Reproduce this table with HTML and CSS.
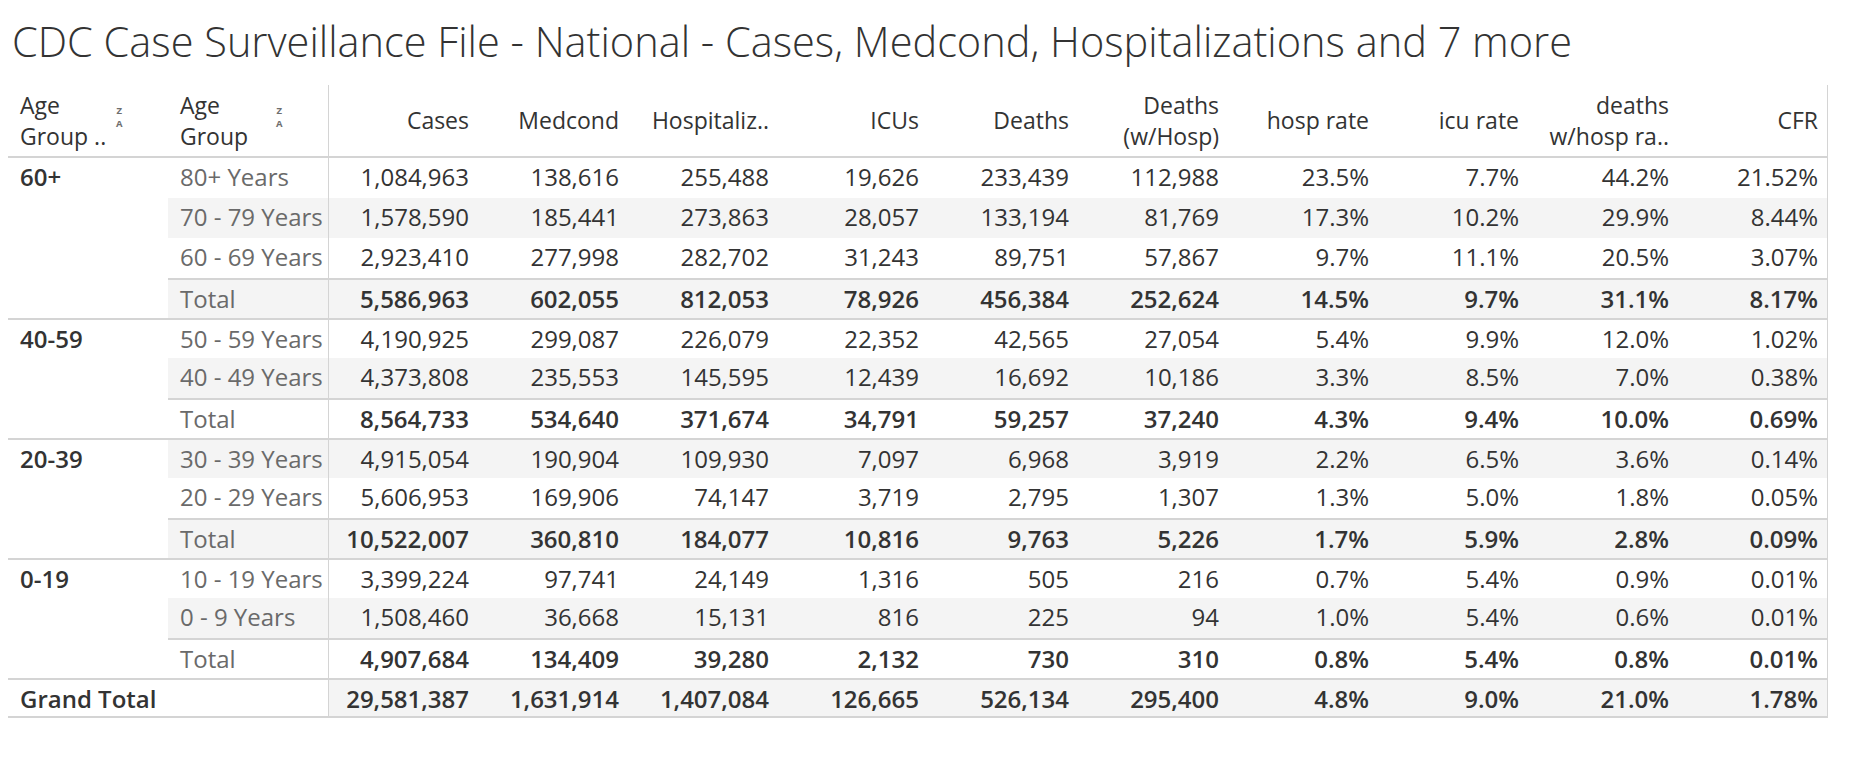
FILE: index.html
```html
<!DOCTYPE html>
<html>
<head>
<meta charset="utf-8">
<link rel="stylesheet" href="styles.css">
</head>
<body>
<div class="page">
  <h1 class="title">CDC Case Surveillance File - National - Cases, Medcond, Hospitalizations and 7 more</h1>
  <div class="grid">
    <div class="hc hl"><span class="lbl">Age<br>Group ..</span><span class="sort">Z<br>A</span></div>
    <div class="hc hl"><span class="lbl">Age<br>Group</span><span class="sort">Z<br>A</span></div>
    <div class="hc hr c1">Cases</div>
    <div class="hc hr">Medcond</div>
    <div class="hc hr">Hospitaliz..</div>
    <div class="hc hr">ICUs</div>
    <div class="hc hr">Deaths</div>
    <div class="hc hr">Deaths<br>(w/Hosp)</div>
    <div class="hc hr">hosp rate</div>
    <div class="hc hr">icu rate</div>
    <div class="hc hr">deaths<br>w/hosp ra..</div>
    <div class="hc hr cl">CFR</div>

    <!-- 60+ -->
    <div class="g span4">60+</div>
    <div class="s">80+ Years</div>
    <div class="n c1">1,084,963</div><div class="n">138,616</div><div class="n">255,488</div><div class="n">19,626</div><div class="n">233,439</div><div class="n">112,988</div><div class="n">23.5%</div><div class="n">7.7%</div><div class="n">44.2%</div><div class="n cl">21.52%</div>
    <div class="s alt">70 - 79 Years</div>
    <div class="n c1 alt">1,578,590</div><div class="n alt">185,441</div><div class="n alt">273,863</div><div class="n alt">28,057</div><div class="n alt">133,194</div><div class="n alt">81,769</div><div class="n alt">17.3%</div><div class="n alt">10.2%</div><div class="n alt">29.9%</div><div class="n cl alt">8.44%</div>
    <div class="s">60 - 69 Years</div>
    <div class="n c1">2,923,410</div><div class="n">277,998</div><div class="n">282,702</div><div class="n">31,243</div><div class="n">89,751</div><div class="n">57,867</div><div class="n">9.7%</div><div class="n">11.1%</div><div class="n">20.5%</div><div class="n cl">3.07%</div>
    <div class="s t alt">Total</div>
    <div class="n t b c1 alt">5,586,963</div><div class="n t b alt">602,055</div><div class="n t b alt">812,053</div><div class="n t b alt">78,926</div><div class="n t b alt">456,384</div><div class="n t b alt">252,624</div><div class="n t b alt">14.5%</div><div class="n t b alt">9.7%</div><div class="n t b alt">31.1%</div><div class="n t b cl alt">8.17%</div>

    <!-- 40-59 -->
    <div class="g span3 sep">40-59</div>
    <div class="s sep">50 - 59 Years</div>
    <div class="n sep c1">4,190,925</div><div class="n sep">299,087</div><div class="n sep">226,079</div><div class="n sep">22,352</div><div class="n sep">42,565</div><div class="n sep">27,054</div><div class="n sep">5.4%</div><div class="n sep">9.9%</div><div class="n sep">12.0%</div><div class="n sep cl">1.02%</div>
    <div class="s alt">40 - 49 Years</div>
    <div class="n c1 alt">4,373,808</div><div class="n alt">235,553</div><div class="n alt">145,595</div><div class="n alt">12,439</div><div class="n alt">16,692</div><div class="n alt">10,186</div><div class="n alt">3.3%</div><div class="n alt">8.5%</div><div class="n alt">7.0%</div><div class="n cl alt">0.38%</div>
    <div class="s t">Total</div>
    <div class="n t b c1">8,564,733</div><div class="n t b">534,640</div><div class="n t b">371,674</div><div class="n t b">34,791</div><div class="n t b">59,257</div><div class="n t b">37,240</div><div class="n t b">4.3%</div><div class="n t b">9.4%</div><div class="n t b">10.0%</div><div class="n t b cl">0.69%</div>

    <!-- 20-39 -->
    <div class="g span3 sep">20-39</div>
    <div class="s sep alt">30 - 39 Years</div>
    <div class="n sep c1 alt">4,915,054</div><div class="n sep alt">190,904</div><div class="n sep alt">109,930</div><div class="n sep alt">7,097</div><div class="n sep alt">6,968</div><div class="n sep alt">3,919</div><div class="n sep alt">2.2%</div><div class="n sep alt">6.5%</div><div class="n sep alt">3.6%</div><div class="n sep cl alt">0.14%</div>
    <div class="s">20 - 29 Years</div>
    <div class="n c1">5,606,953</div><div class="n">169,906</div><div class="n">74,147</div><div class="n">3,719</div><div class="n">2,795</div><div class="n">1,307</div><div class="n">1.3%</div><div class="n">5.0%</div><div class="n">1.8%</div><div class="n cl">0.05%</div>
    <div class="s t alt">Total</div>
    <div class="n t b c1 alt">10,522,007</div><div class="n t b alt">360,810</div><div class="n t b alt">184,077</div><div class="n t b alt">10,816</div><div class="n t b alt">9,763</div><div class="n t b alt">5,226</div><div class="n t b alt">1.7%</div><div class="n t b alt">5.9%</div><div class="n t b alt">2.8%</div><div class="n t b cl alt">0.09%</div>

    <!-- 0-19 -->
    <div class="g span3 sep">0-19</div>
    <div class="s sep">10 - 19 Years</div>
    <div class="n sep c1">3,399,224</div><div class="n sep">97,741</div><div class="n sep">24,149</div><div class="n sep">1,316</div><div class="n sep">505</div><div class="n sep">216</div><div class="n sep">0.7%</div><div class="n sep">5.4%</div><div class="n sep">0.9%</div><div class="n sep cl">0.01%</div>
    <div class="s alt">0 - 9 Years</div>
    <div class="n c1 alt">1,508,460</div><div class="n alt">36,668</div><div class="n alt">15,131</div><div class="n alt">816</div><div class="n alt">225</div><div class="n alt">94</div><div class="n alt">1.0%</div><div class="n alt">5.4%</div><div class="n alt">0.6%</div><div class="n cl alt">0.01%</div>
    <div class="s t">Total</div>
    <div class="n t b c1">4,907,684</div><div class="n t b">134,409</div><div class="n t b">39,280</div><div class="n t b">2,132</div><div class="n t b">730</div><div class="n t b">310</div><div class="n t b">0.8%</div><div class="n t b">5.4%</div><div class="n t b">0.8%</div><div class="n t b cl">0.01%</div>

    <!-- Grand total -->
    <div class="gt sep">Grand Total</div>
    <div class="n sep gtr b c1 alt">29,581,387</div><div class="n sep gtr b alt">1,631,914</div><div class="n sep gtr b alt">1,407,084</div><div class="n sep gtr b alt">126,665</div><div class="n sep gtr b alt">526,134</div><div class="n sep gtr b alt">295,400</div><div class="n sep gtr b alt">4.8%</div><div class="n sep gtr b alt">9.0%</div><div class="n sep gtr b alt">21.0%</div><div class="n sep gtr b cl alt">1.78%</div>
  </div>
</div>
</body>
</html>
```
FILE: styles.css
```css
html, body {
  margin: 0;
  padding: 0;
  background: #ffffff;
}

.page {
  padding: 12px 8px 0 8px;
  font-family: "Open Sans", "Liberation Sans", sans-serif;
  color: #333333;
}

.title {
  margin: 0 0 15px 4px;
  height: 58px;
  line-height: 58px;
  font-size: 41.5px;
  font-weight: 300;
  color: #333333;
  white-space: nowrap;
}

.grid {
  display: grid;
  grid-template-columns: 160px 160px repeat(10, 150px);
  grid-template-rows: 73px repeat(14, 40px);
  font-size: 24px;
}

.grid > div {
  box-sizing: border-box;
}

/* header */
.hc {
  display: flex;
  align-items: center;
  font-size: 23px;
  line-height: 31px;
  border-bottom: 2px solid #d4d4d4;
  color: #333333;
}

.hl {
  padding-left: 12px;
}

.lbl {
  width: 95px;
  flex: none;
}

.hr {
  justify-content: flex-end;
  text-align: right;
  padding-right: 9px;
}

.sort {
  margin-left: 1px;
  margin-top: -8px;
  text-align: center;
  font-size: 9.5px;
  line-height: 13px;
  font-weight: 700;
  color: #6e6e6e;
}

/* body cells */
.g,
.gt {
  padding-left: 12px;
  line-height: 38px;
  font-weight: 600;
  color: #333333;
}

.gt {
  grid-column: span 2;
  border-bottom: 2px solid #d4d4d4;
}

.span4 { grid-row: span 4; }
.span3 { grid-row: span 3; }

.s {
  padding-left: 12px;
  line-height: 38px;
  color: #6a6a6a;
  white-space: nowrap;
}

.n {
  text-align: right;
  padding-right: 9px;
  line-height: 38px;
  color: #333333;
  white-space: nowrap;
}

.b {
  font-weight: 600;
}

.alt {
  background: #f4f4f4;
}

.t {
  border-top: 2px solid #d4d4d4;
}

.sep {
  border-top: 2px solid #d4d4d4;
}

.gtr {
  border-bottom: 2px solid #d4d4d4;
}

.c1 {
  border-left: 1px solid #d4d4d4;
}

.cl {
  border-right: 1px solid #d4d4d4;
}
```
